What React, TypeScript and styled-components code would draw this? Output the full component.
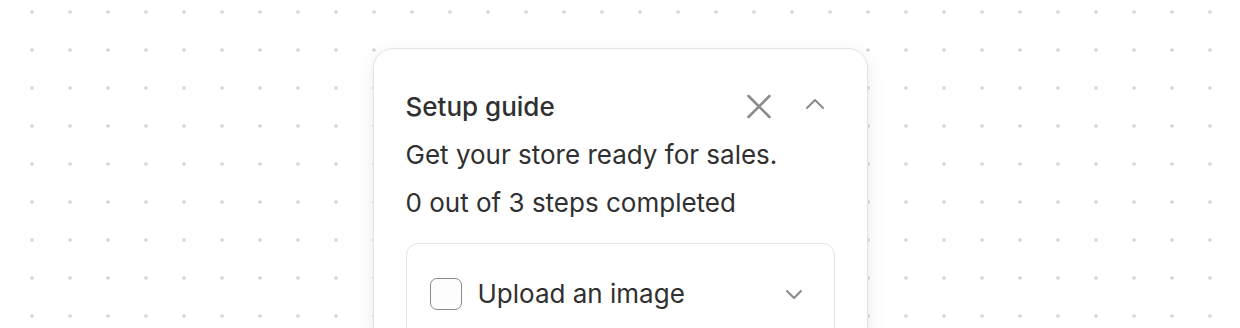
import React, {useState} from 'react'
import styled, {createGlobalStyle} from 'styled-components'

const GlobalStyle = createGlobalStyle`
  html, body {
    margin: 0;
    padding: 0;
    background: #ffffff;
  }
  body {
    font-family: Inter, "Noto Sans", sans-serif;
    color: #303030;
  }
`

const Canvas = styled.main`
  height: 328px;
  overflow: hidden;
  display: flex;
  justify-content: center;
  padding-top: 48px;
  box-sizing: border-box;
  background-color: #ffffff;
  background-image: radial-gradient(circle, #d9d9d9 1.5px, transparent 2px);
  background-size: 38px 38px;
  background-position: 13px -7px;
`

const Card = styled.section`
  width: 495px;
  height: 320px;
  flex-shrink: 0;
  box-sizing: border-box;
  padding: 38px 32px 0;
  background: #ffffff;
  border: 1px solid #e3e3e3;
  border-radius: 20px;
  box-shadow: 0 6px 20px rgba(0, 0, 0, 0.08), 0 1px 3px rgba(0, 0, 0, 0.04);
`

const Header = styled.header`
  height: 40px;
  display: flex;
  align-items: center;
  justify-content: space-between;
`

const Title = styled.h2`
  margin: 0;
  font-size: 26px;
  font-weight: 550;
  line-height: 32px;
  color: #303030;
`

const Actions = styled.div`
  display: flex;
  gap: 16px;
`

const IconButton = styled.button`
  width: 40px;
  height: 40px;
  padding: 0;
  border: 0;
  background: none;
  display: flex;
  align-items: center;
  justify-content: center;
  color: #8a8a8a;
  cursor: pointer;
`

const Text = styled.p<{$gap: number}>`
  margin: ${p => p.$gap}px 0 0;
  font-size: 26px;
  line-height: 32px;
  color: #303030;
`

const StepBox = styled.div`
  margin-top: 24px;
  height: 120px;
  border: 1px solid #e3e3e3;
  border-radius: 12px;
  padding: 30px 20px 0 23px;
`

const StepRow = styled.div`
  display: flex;
  align-items: center;
  gap: 16px;
`

const Check = styled.input`
  appearance: none;
  margin: 0;
  width: 32px;
  height: 32px;
  border: 1.5px solid #8a8a8a;
  border-radius: 7px;
  background: #fdfdfd;
  box-sizing: border-box;
  cursor: pointer;

  &:checked {
    background: #303030;
    border-color: #303030;
  }
`

const StepLabel = styled.span`
  flex: 1;
  font-size: 26px;
  line-height: 32px;
  color: #303030;
`

const Chevron = ({up}: {up?: boolean}) => (
  <svg width="20" height="20" viewBox="0 0 20 20" fill="none" stroke="currentColor" strokeWidth="2" strokeLinecap="round" strokeLinejoin="round">
    {up ? <polyline points="2,11 10,3 18,11" /> : <polyline points="3,7 10,14 17,7" />}
  </svg>
)

const Close = () => (
  <svg width="26" height="26" viewBox="0 0 26 26" fill="none" stroke="currentColor" strokeWidth="2.5" strokeLinecap="round">
    <path d="M2.5 2 L23.5 23 M23.5 2 L2.5 23" />
  </svg>
)

export default function App() {
  const [done, setDone] = useState(false)

  return (
    <>
      <GlobalStyle />
      <Canvas>
        <Card>
          <Header>
            <Title>Setup guide</Title>
            <Actions>
              <IconButton type="button" aria-label="Dismiss">
                <Close />
              </IconButton>
              <IconButton type="button" aria-label="Collapse">
                <Chevron up />
              </IconButton>
            </Actions>
          </Header>
          <Text $gap={12}>Get your store ready for sales.</Text>
          <Text $gap={16}>{done ? 1 : 0} out of 3 steps completed</Text>
          <StepBox>
            <StepRow>
              <Check type="checkbox" checked={done} onChange={() => setDone(!done)} />
              <StepLabel>Upload an image</StepLabel>
              <IconButton type="button" aria-label="Expand">
                <Chevron />
              </IconButton>
            </StepRow>
          </StepBox>
        </Card>
      </Canvas>
    </>
  )
}
